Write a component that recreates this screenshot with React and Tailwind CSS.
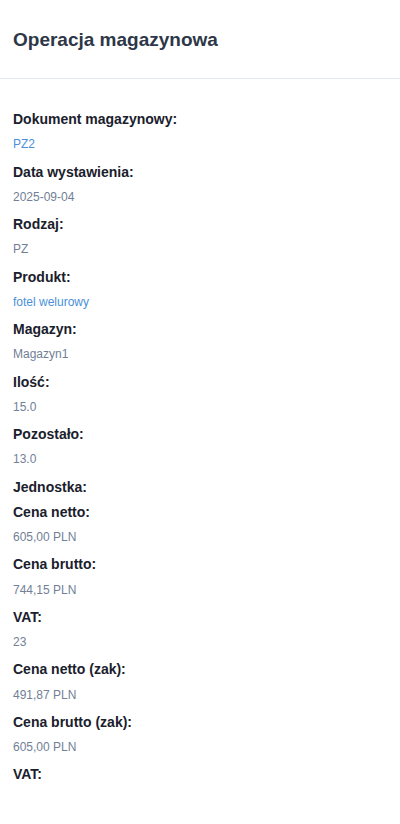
const rows = [
  { label: "Dokument magazynowy:", value: "PZ2", link: true },
  { label: "Data wystawienia:", value: "2025-09-04" },
  { label: "Rodzaj:", value: "PZ" },
  { label: "Produkt:", value: "fotel welurowy", link: true },
  { label: "Magazyn:", value: "Magazyn1" },
  { label: "Ilość:", value: "15.0" },
  { label: "Pozostało:", value: "13.0" },
  { label: "Jednostka:" },
  { label: "Cena netto:", value: "605,00 PLN" },
  { label: "Cena brutto:", value: "744,15 PLN" },
  { label: "VAT:", value: "23" },
  { label: "Cena netto (zak):", value: "491,87 PLN" },
  { label: "Cena brutto (zak):", value: "605,00 PLN" },
  { label: "VAT:" },
];

export default function App() {
  return (
    <div className="min-h-[824px] bg-white font-['Liberation_Sans',Arial,sans-serif]">
      <div className="border-b border-[#e2e8f0] px-[13px] pt-[26px] pb-[24px]">
        <h1 className="text-[19px] leading-7 font-bold text-[#2d3748]">Operacja magazynowa</h1>
      </div>
      <div className="px-[13px] pt-[30px]">
        {rows.map((r, i) => (
          <div key={i}>
            <div className="mb-[5.25px] text-sm leading-5 font-bold text-[#1a202c]">{r.label}</div>
            {r.value && (
              <div
                className={`mb-[7.25px] text-xs leading-5 ${
                  r.link ? "text-[#4a90d9]" : "text-[#718096]"
                }`}
              >
                {r.value}
              </div>
            )}
          </div>
        ))}
      </div>
    </div>
  );
}
